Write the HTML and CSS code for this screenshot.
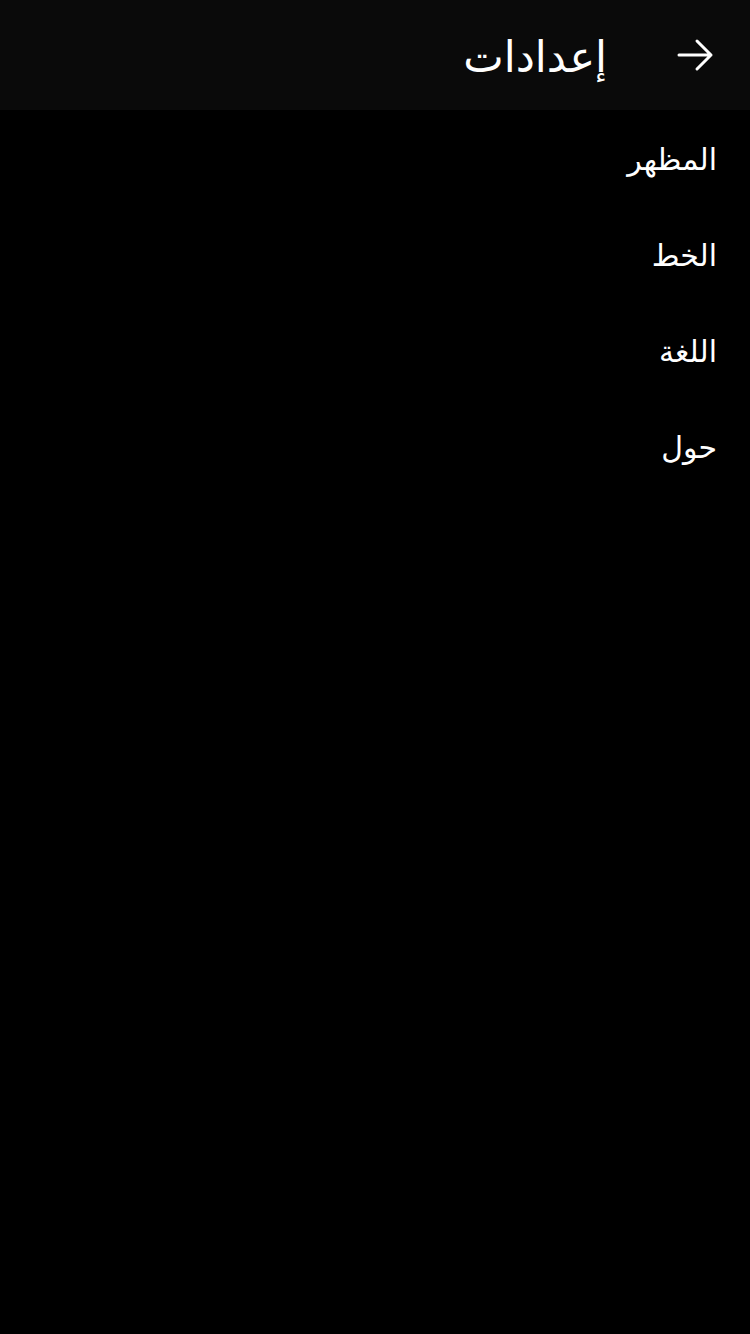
FILE: index.html
```html
<!DOCTYPE html>
<html lang="ar" dir="rtl">
<head>
<meta charset="utf-8">
<link rel="stylesheet" href="styles.css">
</head>
<body>
<header class="bar">
  <button class="back" aria-label="رجوع">
    <svg width="48" height="48" viewBox="0 0 24 24" fill="none" stroke="#fff" stroke-width="1.5" stroke-linecap="round" stroke-linejoin="round"><path d="M4 12h16M13 5l7 7-7 7"/></svg>
  </button>
  <h1 class="title">إعدادات</h1>
</header>
<ul class="list">
  <li class="item">المظهر</li>
  <li class="item">الخط</li>
  <li class="item">اللغة</li>
  <li class="item">حول</li>
</ul>
</body>
</html>
```
FILE: styles.css
```css
html, body {
  margin: 0;
  padding: 0;
  background: #000;
  color: #fff;
  font-family: "Noto Sans", "DejaVu Sans", sans-serif;
}
.bar {
  height: 110px;
  background: #0a0a0a;
  display: flex;
  align-items: center;
  padding-right: 31px;
  gap: 64px;
}
.back {
  background: none;
  border: 0;
  padding: 0;
  width: 48px;
  height: 48px;
  display: flex;
  align-items: center;
  justify-content: center;
}
.title {
  margin: 0;
  font-size: 43px;
  font-weight: 400;
}
.list {
  list-style: none;
  margin: 0;
  padding: 0;
}
.item {
  height: 96px;
  display: flex;
  align-items: center;
  padding-right: 33px;
  font-size: 30px;
}
```
